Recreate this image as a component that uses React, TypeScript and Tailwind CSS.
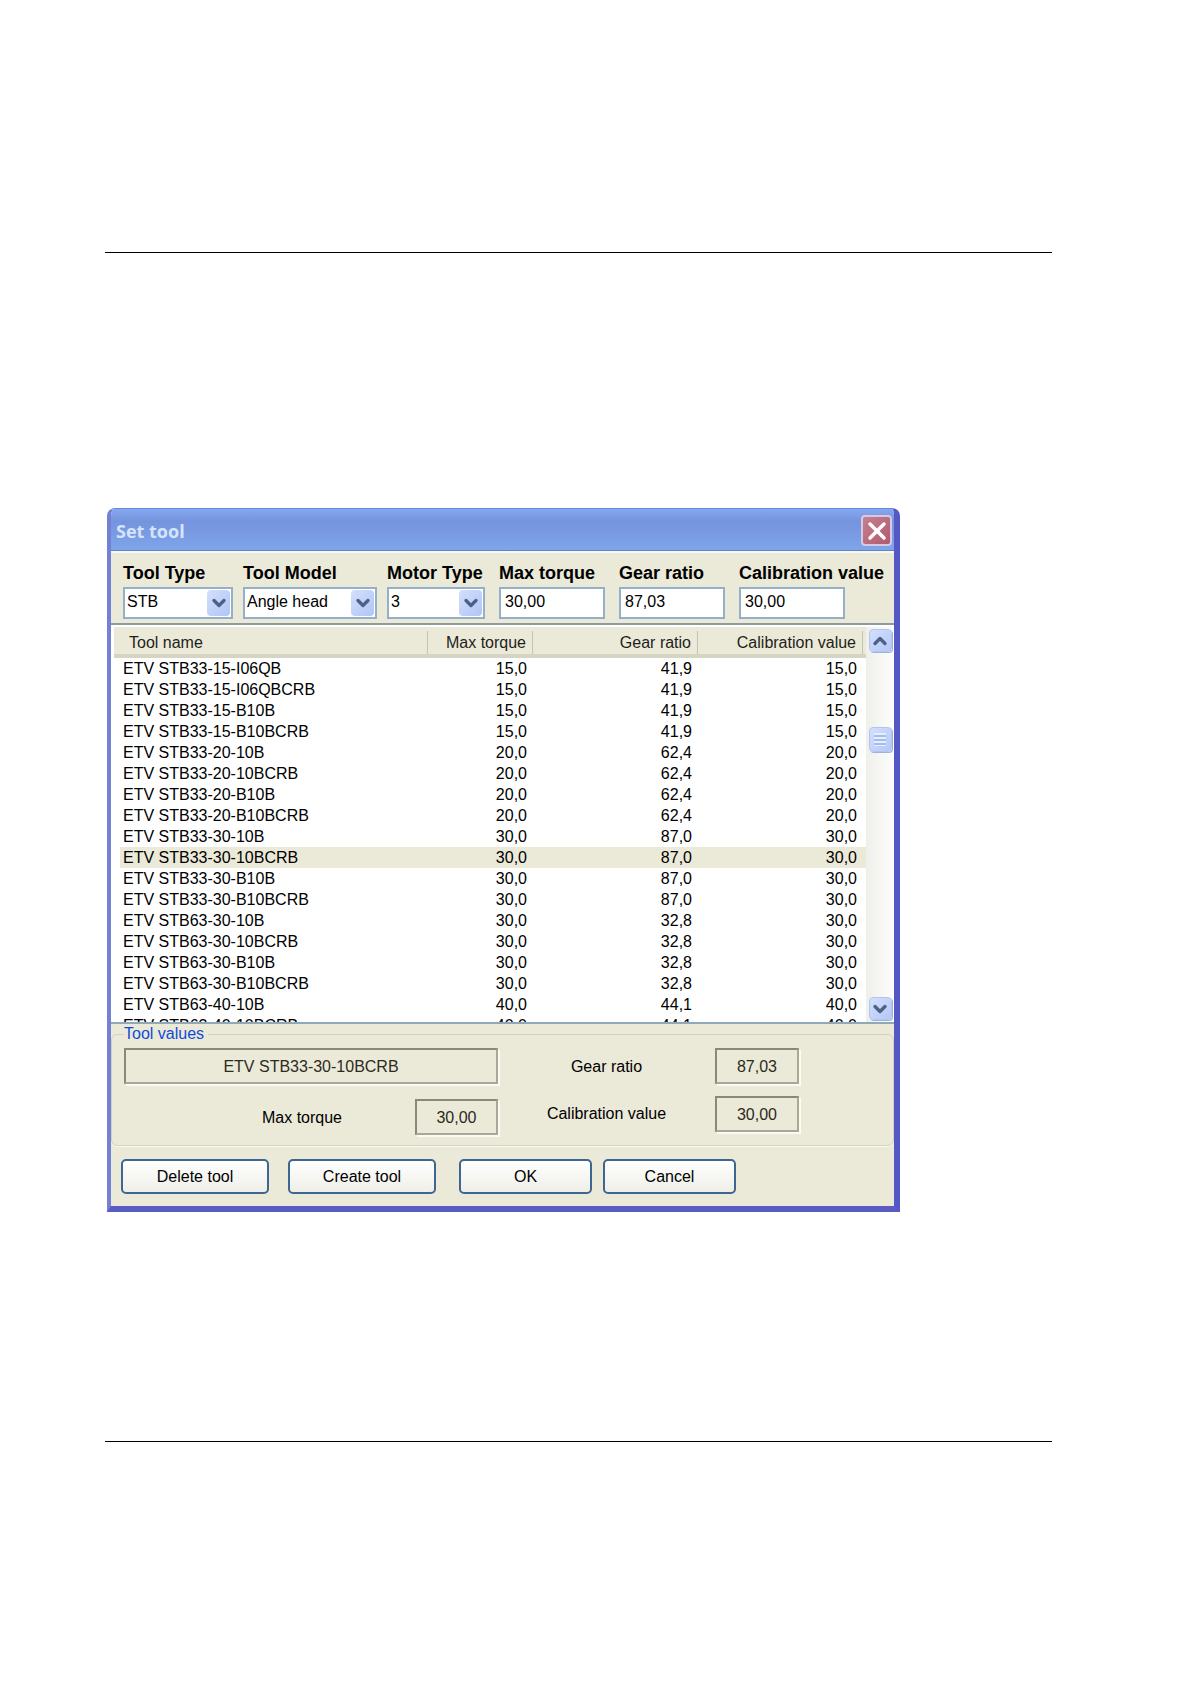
import { ChevronDown, ChevronUp, X } from 'lucide-react';

const tools = [
  ['ETV STB33-15-I06QB', '15,0', '41,9', '15,0'],
  ['ETV STB33-15-I06QBCRB', '15,0', '41,9', '15,0'],
  ['ETV STB33-15-B10B', '15,0', '41,9', '15,0'],
  ['ETV STB33-15-B10BCRB', '15,0', '41,9', '15,0'],
  ['ETV STB33-20-10B', '20,0', '62,4', '20,0'],
  ['ETV STB33-20-10BCRB', '20,0', '62,4', '20,0'],
  ['ETV STB33-20-B10B', '20,0', '62,4', '20,0'],
  ['ETV STB33-20-B10BCRB', '20,0', '62,4', '20,0'],
  ['ETV STB33-30-10B', '30,0', '87,0', '30,0'],
  ['ETV STB33-30-10BCRB', '30,0', '87,0', '30,0'],
  ['ETV STB33-30-B10B', '30,0', '87,0', '30,0'],
  ['ETV STB33-30-B10BCRB', '30,0', '87,0', '30,0'],
  ['ETV STB63-30-10B', '30,0', '32,8', '30,0'],
  ['ETV STB63-30-10BCRB', '30,0', '32,8', '30,0'],
  ['ETV STB63-30-B10B', '30,0', '32,8', '30,0'],
  ['ETV STB63-30-B10BCRB', '30,0', '32,8', '30,0'],
  ['ETV STB63-40-10B', '40,0', '44,1', '40,0'],
  ['ETV STB63-40-10BCRB', '40,0', '44,1', '40,0'],
];

const selectedTool = 'ETV STB33-30-10BCRB';

function SelectField({ id, label, value, width }: { id: string; label: string; value: string; width: string }) {
  return (
    <div className={width}>
      <label htmlFor={id} className="block whitespace-nowrap text-lg leading-6 font-bold">
        {label}
      </label>
      <div className="relative mt-0.5">
        <select
          id={id}
          defaultValue={value}
          className="block h-8 w-full appearance-none border-2 border-[#93b0c8] bg-white pb-0.5 pl-0.5 leading-5"
        >
          <option>{value}</option>
        </select>
        <span className="pointer-events-none absolute inset-y-[3px] right-[3px] flex w-[23px] items-center justify-center rounded-sm bg-linear-to-br from-[#d3dffc] to-[#b0c5f5]">
          <ChevronDown className="h-5 w-5 text-[#4d6185]" strokeWidth={4} />
        </span>
      </div>
    </div>
  );
}

function NumberField({ id, label, value }: { id: string; label: string; value: string }) {
  return (
    <div className="w-[106px]">
      <label htmlFor={id} className="block whitespace-nowrap text-lg leading-6 font-bold">
        {label}
      </label>
      <input
        id={id}
        defaultValue={value}
        className="mt-0.5 block h-8 w-full border-2 border-[#93b0c8] bg-white pb-0.5 pl-1"
      />
    </div>
  );
}

const sunken =
  'block h-9 border-2 border-t-[#8a887a] border-l-[#8a887a] border-r-[#a9a798] border-b-[#a9a798] bg-[#ebe9d8] pt-0.5 text-center shadow-[2px_2px_0_#fbfbf3] text-[#2b2b22]';

const scrollButton =
  'flex w-[23px] items-center justify-center rounded-sm border border-[#b4c6f0] bg-linear-to-br from-[#d3dffc] to-[#b4c8f7] shadow-[1px_1px_0_#9fb3da]';

const dialogButton =
  'h-[35px] rounded-[5px] border-2 border-[#3d6790] bg-linear-to-b from-white to-[#efeee8] text-center';

export default function App() {
  return (
    <div className="min-h-screen bg-white pt-[252px] pr-[139px] pb-60 pl-[105px] font-['Liberation_Sans',Arial,sans-serif] text-base text-black">
      <hr className="border-t border-black" />

      <section
        aria-labelledby="dialog-title"
        className="mt-[255px] mb-[229px] ml-0.5 max-w-[793px] overflow-hidden rounded-t-[8px] border-t border-r-[6px] border-b-[6px] border-l-[4px] border-t-[#6486dc] border-r-[#5558c4] border-b-[#5a5cc4] border-l-[#7480d4] bg-[#ebe9d8]"
      >
        <header className="flex h-[42px] items-center justify-between border-b border-[#6380d0] bg-linear-to-b from-[#86a8f0] via-[#7594de] via-30% to-[#7ea5ea] pt-0.5 pr-0.5 pl-[5px]">
          <h1 id="dialog-title" className="font-['Open_Sans',sans-serif] text-lg font-bold text-[#d6e4fb]">
            Set tool
          </h1>
          <button
            aria-label="Close"
            className="flex h-[31px] w-[31px] items-center justify-center rounded border-2 border-[#d5c9e6] bg-linear-to-br from-[#c4808f] to-[#b25a70]"
          >
            <X className="h-7 w-7 shrink-0 text-white" strokeWidth={3} />
          </button>
        </header>

        <form className="flex border-t-2 border-[#f8f8f0] pt-2 pb-1 pl-3">
          <SelectField id="tool-type" label="Tool Type" value="STB" width="mr-2.5 w-[110px]" />
          <SelectField id="tool-model" label="Tool Model" value="Angle head" width="mr-2.5 w-[134px]" />
          <SelectField id="motor-type" label="Motor Type" value="3" width="mr-3.5 w-[98px]" />
          <div className="flex gap-3.5">
            <NumberField id="max-torque" label="Max torque" value="30,00" />
            <NumberField id="gear-ratio" label="Gear ratio" value="87,03" />
            <NumberField id="calibration" label="Calibration value" value="30,00" />
          </div>
        </form>

        <div className="flex h-[401px] overflow-hidden border-t-2 border-b-2 border-t-[#8f9a9c] border-b-[#8fa9b8] bg-white pt-0.5 pl-[3px]">
          <table className="w-full table-fixed border-separate border-spacing-0 self-start">
            <colgroup>
              <col className="w-[6px]" />
              <col />
              <col className="w-[105px]" />
              <col className="w-[165px]" />
              <col className="w-[165px]" />
              <col className="w-[3px]" />
            </colgroup>
            <thead>
              <tr className="h-[31px] bg-[#ebe9d8] leading-[23px] text-[#1e1e1a] [&>th]:border-b-4 [&>th]:border-[#d6d4c2] [&>th]:pt-1 [&>th]:font-normal">
                <th colSpan={2} className="pl-[15px] text-left">
                  <span className="flex justify-between border-r border-[#c5c3b2]">Tool name</span>
                </th>
                {['Max torque', 'Gear ratio', 'Calibration value'].map((title) => (
                  <th key={title} className="text-right whitespace-nowrap">
                    <span className="block border-r border-[#c5c3b2] pr-1.5">{title}</span>
                  </th>
                ))}
                <th />
              </tr>
            </thead>
            <tbody>
              {tools.map(([name, torque, ratio, calibration]) => (
                <tr
                  key={name}
                  className={
                    name === selectedTool
                      ? 'h-[21px] leading-[21px] [&>td]:bg-[#ebe9d8]'
                      : 'h-[21px] leading-[21px]'
                  }
                >
                  <td className="bg-white!" />
                  <td className="pl-[3px] whitespace-nowrap">{name}</td>
                  <td className="pr-1.5 text-right">{torque}</td>
                  <td className="pr-1.5 text-right">{ratio}</td>
                  <td className="pr-1.5 text-right">{calibration}</td>
                  <td />
                </tr>
              ))}
            </tbody>
          </table>

          <div className="flex w-7 shrink-0 flex-col items-center bg-linear-to-r from-[#f0f0ea] to-[#fdfdfc] pt-0.5 pb-0.5">
            <button aria-label="Scroll up" className={`${scrollButton} h-[23px]`}>
              <ChevronUp className="h-5 w-5 shrink-0 text-[#4d6185]" strokeWidth={4} />
            </button>
            <div className="mt-[75px] w-[23px]">
              <div className={`${scrollButton} h-[25px]`}>
                <span className="h-[13px] w-3 bg-[repeating-linear-gradient(to_bottom,#e6eefe_0px,#e6eefe_2px,#a6bcf0_2px,#a6bcf0_4px)]" />
              </div>
            </div>
            <button aria-label="Scroll down" className={`${scrollButton} mt-auto h-[23px]`}>
              <ChevronDown className="h-5 w-5 shrink-0 text-[#4d6185]" strokeWidth={4} />
            </button>
          </div>
        </div>

        <fieldset className="rounded-md border border-[#d3d2c0] pb-2.5 pl-3 shadow-[0_1px_0_#fbfbf3]">
          <legend className="h-5 pr-1 leading-5 text-[#0f4bd8]">Tool values</legend>
          <div className="flex pt-1">
            <div className="w-[374px]">
              <input aria-label="Tool name" readOnly value={selectedTool} className={`${sunken} w-full`} />
              <div className="mt-[15px] flex items-center justify-end gap-[73px]">
                <label htmlFor="value-torque" className="pt-0.5">Max torque</label>
                <input id="value-torque" readOnly value="30,00" className={`${sunken} w-[83px]`} />
              </div>
            </div>
            <div className="grid grid-cols-[217px_84px] content-start items-center gap-y-3">
              <label htmlFor="value-ratio" className="pt-0.5 text-center">Gear ratio</label>
              <input id="value-ratio" readOnly value="87,03" className={`${sunken} w-full`} />
              <label htmlFor="value-calibration" className="text-center">Calibration value</label>
              <input id="value-calibration" readOnly value="30,00" className={`${sunken} w-full`} />
            </div>
          </div>
        </fieldset>

        <footer className="flex pt-[13px] pb-3 pl-2.5">
          <button className={`${dialogButton} w-[148px]`}>Delete tool</button>
          <button className={`${dialogButton} ml-[19px] w-[148px]`}>Create tool</button>
          <button className={`${dialogButton} ml-[23px] w-[133px]`}>OK</button>
          <button className={`${dialogButton} ml-[11px] w-[133px]`}>Cancel</button>
        </footer>
      </section>

      <hr className="border-t border-black" />
    </div>
  );
}
